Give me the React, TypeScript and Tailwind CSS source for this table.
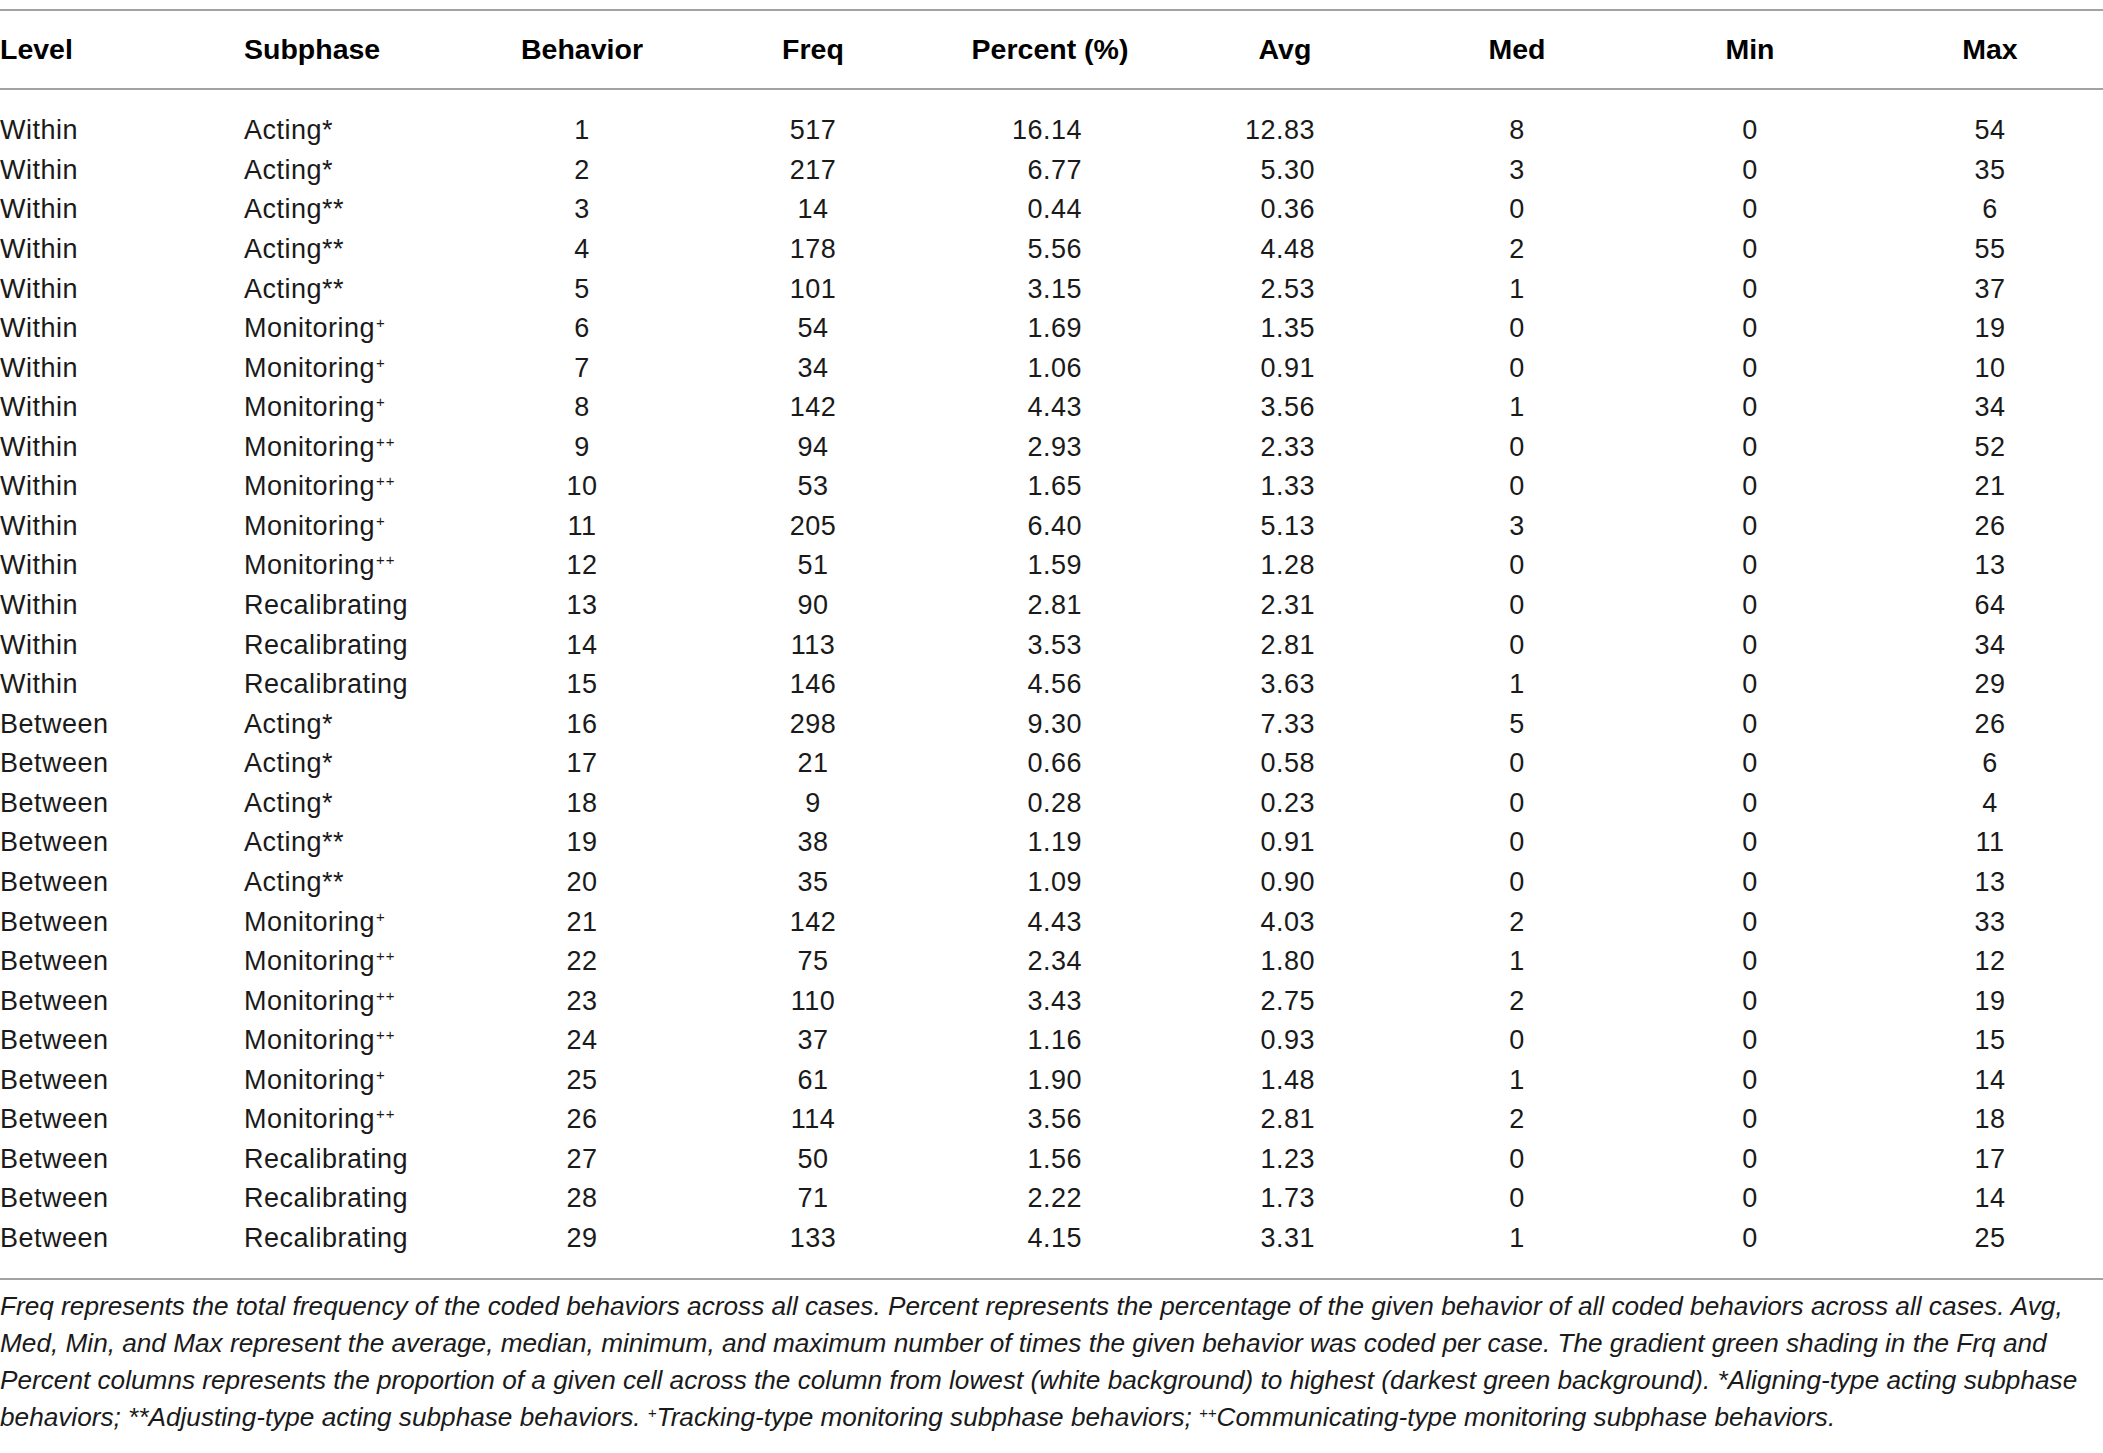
import React from "react";

type Row = [string, string, string, number, number, string, string, number, number, number];

const P = "+";
const PP = "++";

const rows: Row[] = [
  ["Within", "Acting", "*", 1, 517, "16.14", "12.83", 8, 0, 54],
  ["Within", "Acting", "*", 2, 217, "6.77", "5.30", 3, 0, 35],
  ["Within", "Acting", "**", 3, 14, "0.44", "0.36", 0, 0, 6],
  ["Within", "Acting", "**", 4, 178, "5.56", "4.48", 2, 0, 55],
  ["Within", "Acting", "**", 5, 101, "3.15", "2.53", 1, 0, 37],
  ["Within", "Monitoring", P, 6, 54, "1.69", "1.35", 0, 0, 19],
  ["Within", "Monitoring", P, 7, 34, "1.06", "0.91", 0, 0, 10],
  ["Within", "Monitoring", P, 8, 142, "4.43", "3.56", 1, 0, 34],
  ["Within", "Monitoring", PP, 9, 94, "2.93", "2.33", 0, 0, 52],
  ["Within", "Monitoring", PP, 10, 53, "1.65", "1.33", 0, 0, 21],
  ["Within", "Monitoring", P, 11, 205, "6.40", "5.13", 3, 0, 26],
  ["Within", "Monitoring", PP, 12, 51, "1.59", "1.28", 0, 0, 13],
  ["Within", "Recalibrating", "", 13, 90, "2.81", "2.31", 0, 0, 64],
  ["Within", "Recalibrating", "", 14, 113, "3.53", "2.81", 0, 0, 34],
  ["Within", "Recalibrating", "", 15, 146, "4.56", "3.63", 1, 0, 29],
  ["Between", "Acting", "*", 16, 298, "9.30", "7.33", 5, 0, 26],
  ["Between", "Acting", "*", 17, 21, "0.66", "0.58", 0, 0, 6],
  ["Between", "Acting", "*", 18, 9, "0.28", "0.23", 0, 0, 4],
  ["Between", "Acting", "**", 19, 38, "1.19", "0.91", 0, 0, 11],
  ["Between", "Acting", "**", 20, 35, "1.09", "0.90", 0, 0, 13],
  ["Between", "Monitoring", P, 21, 142, "4.43", "4.03", 2, 0, 33],
  ["Between", "Monitoring", PP, 22, 75, "2.34", "1.80", 1, 0, 12],
  ["Between", "Monitoring", PP, 23, 110, "3.43", "2.75", 2, 0, 19],
  ["Between", "Monitoring", PP, 24, 37, "1.16", "0.93", 0, 0, 15],
  ["Between", "Monitoring", P, 25, 61, "1.90", "1.48", 1, 0, 14],
  ["Between", "Monitoring", PP, 26, 114, "3.56", "2.81", 2, 0, 18],
  ["Between", "Recalibrating", "", 27, 50, "1.56", "1.23", 0, 0, 17],
  ["Between", "Recalibrating", "", 28, 71, "2.22", "1.73", 0, 0, 14],
  ["Between", "Recalibrating", "", 29, 133, "4.15", "3.31", 1, 0, 25],
];

const grid = "grid grid-cols-[244px_222px_232px_230px_244px_226px_238px_228px_239px]";

function Mark({ m }: { m: string }) {
  if (!m) return null;
  if (m.startsWith("*")) return <span>{m}</span>;
  return <span className="relative -top-[9px] text-[15px] tracking-[1px] ml-[1px]">{m}</span>;
}

export default function App() {
  return (
    <div
      className="w-[2103px] min-h-[1453px] bg-white text-[#1a1a1a] pt-[9px]"
      style={{ fontFamily: '"Liberation Sans", Arial, sans-serif' }}
    >
      <div className="border-t-2 border-b-2 border-[#a3a3a3]">
        <div className={`${grid} h-[77px] items-center text-[28.5px] font-bold text-black`}>
          <div>Level</div>
          <div>Subphase</div>
          <div className="text-center">Behavior</div>
          <div className="text-center">Freq</div>
          <div className="text-center">Percent (%)</div>
          <div className="text-center">Avg</div>
          <div className="text-center">Med</div>
          <div className="text-center">Min</div>
          <div className="text-center pl-[13px]">Max</div>
        </div>
      </div>
      <div className="border-b-2 border-[#a3a3a3] pt-[21px] pb-[20px] text-[27px] tracking-[0.5px]">
        {rows.map((r, i) => (
          <div key={i} className={`${grid} h-[39.57px] items-center leading-none`}>
            <div>{r[0]}</div>
            <div className="whitespace-nowrap">
              {r[1]}
              <Mark m={r[2]} />
            </div>
            <div className="text-center">{r[3]}</div>
            <div className="text-center">{r[4]}</div>
            <div className="text-right pr-[90px]">{r[5]}</div>
            <div className="text-right pr-[83px]">{r[6]}</div>
            <div className="text-center">{r[7]}</div>
            <div className="text-center">{r[8]}</div>
            <div className="text-center pl-[13px]">{r[9]}</div>
          </div>
        ))}
      </div>
      <div className="pt-[8px] text-[26.2px] italic leading-[37px] text-[#1a1a1a]">
        <div className="whitespace-nowrap">
          Freq represents the total frequency of the coded behaviors across all cases. Percent represents the percentage of the given behavior of all coded behaviors across all cases. Avg,
        </div>
        <div className="whitespace-nowrap">
          Med, Min, and Max represent the average, median, minimum, and maximum number of times the given behavior was coded per case. The gradient green shading in the Frq and
        </div>
        <div className="whitespace-nowrap">
          Percent columns represents the proportion of a given cell across the column from lowest (white background) to highest (darkest green background). *Aligning-type acting subphase
        </div>
        <div className="whitespace-nowrap">
          behaviors; **Adjusting-type acting subphase behaviors.{" "}
          <span className="relative -top-[8px] text-[15px]">+</span>Tracking-type monitoring subphase behaviors;{" "}
          <span className="relative -top-[8px] text-[15px]">++</span>Communicating-type monitoring subphase behaviors.
        </div>
      </div>
    </div>
  );
}
